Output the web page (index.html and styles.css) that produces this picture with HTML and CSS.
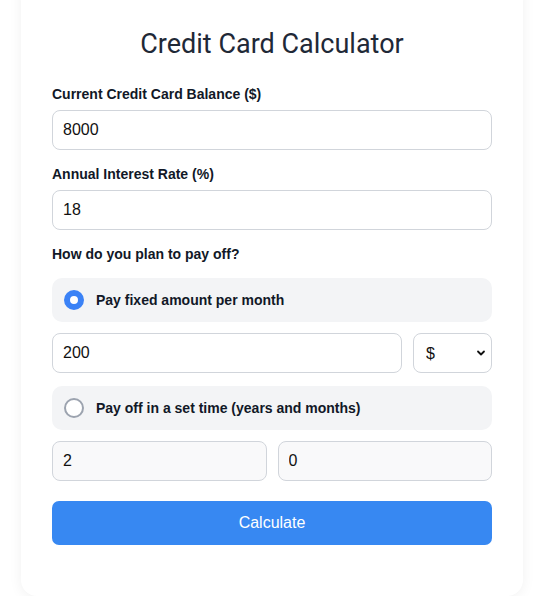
FILE: index.html
```html
<!DOCTYPE html>
<html>
<head>
  <meta charset="utf-8" />
  <title>Credit Card Calculator</title>
  <meta name="viewport" content="width=device-width,initial-scale=1.0" />
  <link rel="stylesheet" href="styles.css">
</head>
<body>
<div class="card">
  <h1 class="title">Credit Card Calculator</h1>

  <div class="group">
    <label class="fieldLabel" for="balance">Current Credit Card Balance ($)</label>
    <input class="field" id="balance" type="text" value="8000" />
  </div>

  <div class="group">
    <label class="fieldLabel" for="rate">Annual Interest Rate (%)</label>
    <input class="field" id="rate" type="text" value="18" />
  </div>

  <div class="fieldLabel planLabel">How do you plan to pay off?</div>

  <label class="option">
    <input class="radio" type="radio" name="plan" value="fixed" checked />
    <span>Pay fixed amount per month</span>
  </label>
  <div class="row">
    <input class="field grow" type="text" value="200" />
    <div class="selectWrap">
      <select class="field select">
        <option>$</option>
        <option>%</option>
      </select>
      <svg class="chevron" width="10" height="10" viewBox="0 0 10 10"><path d="M2 3.5 L5 6.5 L8 3.5" fill="none" stroke="#111" stroke-width="1.8" stroke-linecap="round" stroke-linejoin="round"/></svg>
    </div>
  </div>

  <label class="option">
    <input class="radio" type="radio" name="plan" value="time" />
    <span>Pay off in a set time (years and months)</span>
  </label>
  <div class="row">
    <input class="field grow muted" type="text" value="2" />
    <input class="field grow muted" type="text" value="0" />
  </div>

  <button class="calcBtn">Calculate</button>
</div>
</body>
</html>
```

FILE: styles.css
```css
body {
  margin: 0;
  background: #fff;
  font-family: "Liberation Sans", Arial, sans-serif;
  color: #111827;
}

.card {
  width: 502px;
  box-sizing: border-box;
  margin: -23px auto 0 21px;
  padding: 51px 31px 51px;
  background: #fff;
  border-radius: 16px;
  box-shadow: 0 2px 14px rgba(0,0,0,0.06);
}

.title {
  margin: 0 0 26px;
  font-family: Roboto, "Liberation Sans", sans-serif;
  font-weight: 400;
  font-size: 27px;
  line-height: 32px;
  text-align: center;
  color: #1f2937;
}

.group {
  margin-bottom: 16px;
}

.fieldLabel {
  display: block;
  font-size: 14px;
  line-height: 16px;
  font-weight: bold;
  color: #111827;
  margin-bottom: 8px;
}

.planLabel {
  margin-bottom: 16px;
}

.field {
  display: block;
  width: 100%;
  box-sizing: border-box;
  height: 40px;
  padding: 0 10px;
  border: 1px solid #d1d5db;
  border-radius: 8px;
  background: #fff;
  font-family: "Liberation Sans", Arial, sans-serif;
  font-size: 16px;
  color: #111;
  outline: none;
}

.field.muted {
  background: #f9f9fa;
}

.option {
  display: flex;
  align-items: center;
  gap: 12px;
  height: 44px;
  padding: 0 12px;
  background: #f3f4f6;
  border-radius: 10px;
  font-size: 14px;
  font-weight: bold;
  color: #111827;
}

.radio {
  appearance: none;
  -webkit-appearance: none;
  margin: 0;
  width: 20px;
  height: 20px;
  box-sizing: border-box;
  border-radius: 50%;
  border: 2px solid #9ca3af;
  background: #fff;
}

.radio:checked {
  border: 6px solid #3b82f6;
}

.row {
  display: flex;
  gap: 11px;
  margin: 11px 0 13px;
}

.row:last-of-type {
  margin-bottom: 20px;
}

.grow {
  flex: 1;
  min-width: 0;
}

.selectWrap {
  position: relative;
  width: 79px;
}

.select {
  appearance: none;
  -webkit-appearance: none;
  padding: 0 12px;
}

.chevron {
  position: absolute;
  right: 6px;
  top: 15px;
  pointer-events: none;
}

.calcBtn {
  display: block;
  width: 100%;
  height: 44px;
  border: none;
  border-radius: 7px;
  background: #3788f2;
  color: #fff;
  font-family: "Liberation Sans", Arial, sans-serif;
  font-size: 16px;
}
```
